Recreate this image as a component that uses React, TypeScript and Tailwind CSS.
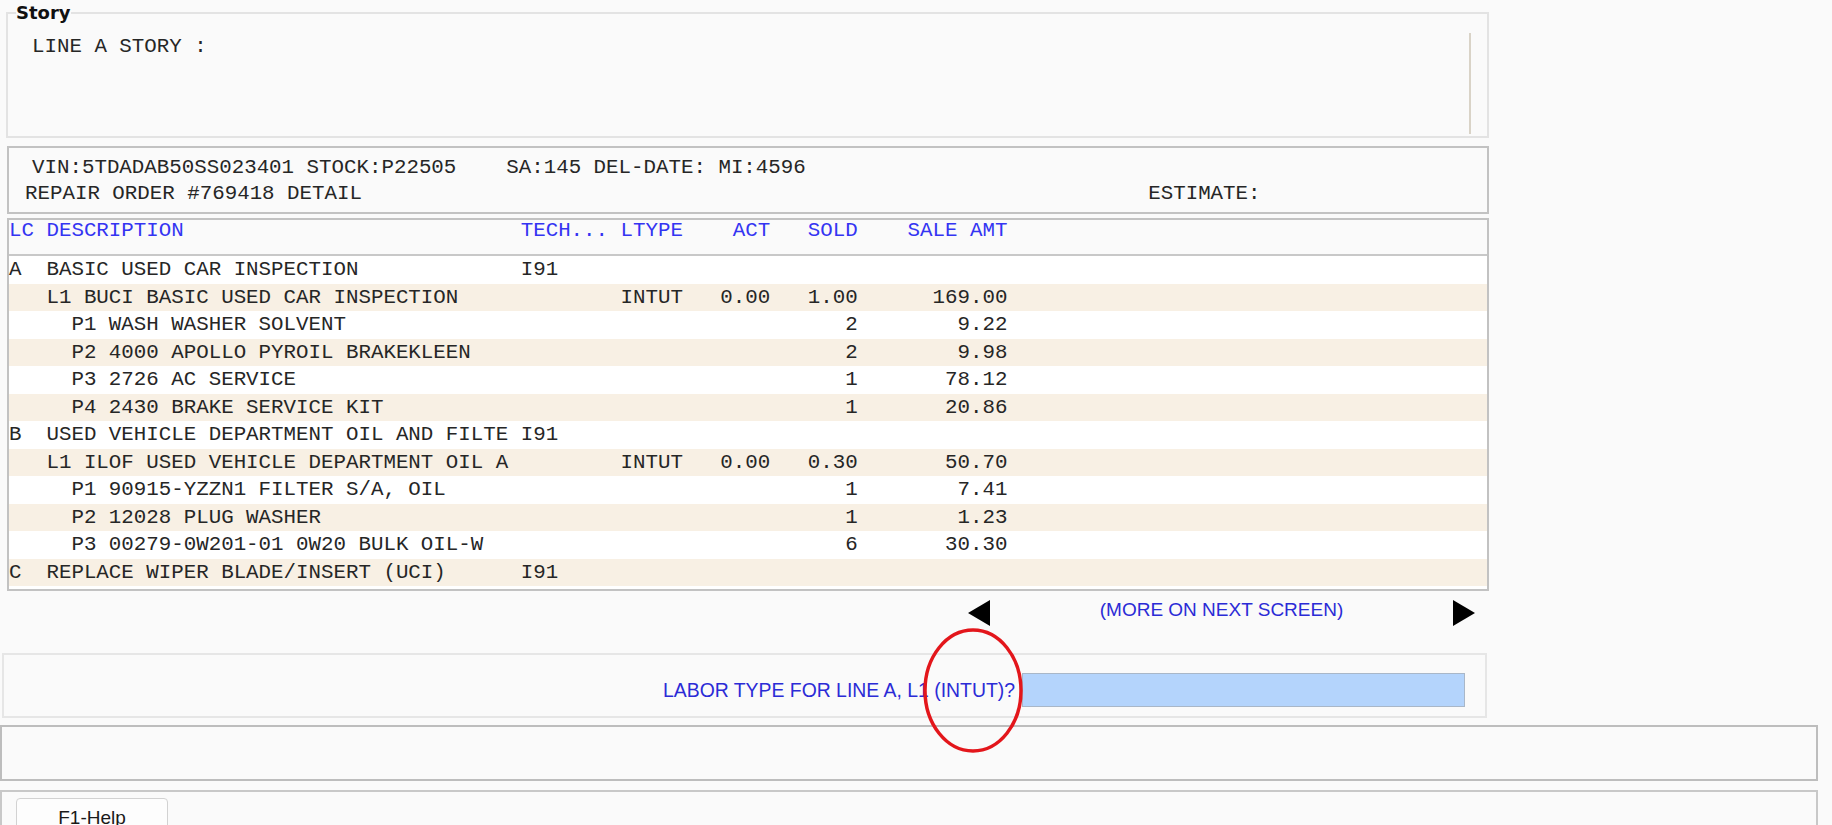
import React from "react";

type Line = { d: string; tech?: string; lt?: string; act?: string; sold?: string; amt?: string };

const lines: Line[] = [
  { d: "A  BASIC USED CAR INSPECTION", tech: "I91" },
  { d: "   L1 BUCI BASIC USED CAR INSPECTION", lt: "INTUT", act: "0.00", sold: "1.00", amt: "169.00" },
  { d: "     P1 WASH WASHER SOLVENT", sold: "2", amt: "9.22" },
  { d: "     P2 4000 APOLLO PYROIL BRAKEKLEEN", sold: "2", amt: "9.98" },
  { d: "     P3 2726 AC SERVICE", sold: "1", amt: "78.12" },
  { d: "     P4 2430 BRAKE SERVICE KIT", sold: "1", amt: "20.86" },
  { d: "B  USED VEHICLE DEPARTMENT OIL AND FILTE", tech: "I91" },
  { d: "   L1 ILOF USED VEHICLE DEPARTMENT OIL A", lt: "INTUT", act: "0.00", sold: "0.30", amt: "50.70" },
  { d: "     P1 90915-YZZN1 FILTER S/A, OIL", sold: "1", amt: "7.41" },
  { d: "     P2 12028 PLUG WASHER", sold: "1", amt: "1.23" },
  { d: "     P3 00279-0W201-01 0W20 BULK OIL-W", sold: "6", amt: "30.30" },
  { d: "C  REPLACE WIPER BLADE/INSERT (UCI)", tech: "I91" },
];

// fixed column grid, same as the green screen
function fmt(l: Line) {
  return (
    l.d.padEnd(41) +
    (l.tech ?? "").padEnd(8) +
    (l.lt ?? "").padEnd(8) +
    (l.act ?? "").padStart(4) +
    "   " +
    (l.sold ?? "").padStart(4) +
    "    " +
    (l.amt ?? "").padStart(8)
  );
}

const mono = "font-['Liberation_Mono','Courier_New',monospace] text-[20.8px] text-[#262626] whitespace-pre";

export default function App() {
  return (
    <div className="h-[825px] w-full overflow-hidden bg-[#fafafa]">
      {/* Story */}
      <fieldset className="ml-[6px] mt-[2px] w-[1483px] border-2 border-[#e3e3e3] px-[8px] pb-[2px]">
        <legend className="font-['DejaVu_Sans',sans-serif] text-[18px] font-bold leading-[21px] text-[#111]">
          Story
        </legend>
        <div className={`mt-[10px] mr-[8px] h-[101px] border-r-2 border-[#d9d3c7] pl-[16px] leading-[27px] ${mono}`}>
          LINE A STORY :
        </div>
      </fieldset>

      {/* RO header */}
      <div className={`ml-[7px] mt-[8px] h-[68px] w-[1482px] border-2 border-[#c2c2c2] pt-[7px] leading-[26px] ${mono}`}>
        <div className="pl-[23px]">VIN:5TDADAB50SS023401 STOCK:P22505    SA:145 DEL-DATE: MI:4596</div>
        <div className="pl-[16px]">{"REPAIR ORDER #769418 DETAIL".padEnd(90) + "ESTIMATE:"}</div>
      </div>

      {/* Detail lines */}
      <div className={`ml-[7px] mt-[4px] w-[1482px] border-2 border-[#c2c2c2] bg-white pb-[3px] ${mono}`}>
        <div className="h-[36px] border-b-2 border-[#c8c8c8] bg-[#fafafa] leading-[22px] text-[#3434f2]">
          {fmt({ d: "LC DESCRIPTION", tech: "TECH...", lt: "LTYPE", act: "ACT", sold: "SOLD", amt: "SALE AMT" })}
        </div>
        {lines.map((l, i) => (
          <div key={i} className={`h-[27.5px] leading-[27.5px] ${i % 2 === 1 ? "bg-[#f8f0e4]" : "bg-white"}`}>
            {fmt(l)}
          </div>
        ))}
      </div>

      {/* paging */}
      <div className="mt-[9px] flex h-[26px] items-start">
        <div className="w-[968px] shrink-0" />
        <svg width="22" height="26" viewBox="0 0 22 26" className="shrink-0">
          <polygon points="0,13 22,0 22,26" fill="#000" />
        </svg>
        <div className="w-[463px] shrink-0 text-center font-['Liberation_Sans',Arial,sans-serif] text-[19px] leading-[20px] text-[#2b2bd6]">
          (MORE ON NEXT SCREEN)
        </div>
        <svg width="22" height="26" viewBox="0 0 22 26" className="shrink-0">
          <polygon points="0,0 22,13 0,26" fill="#000" />
        </svg>
      </div>

      {/* prompt */}
      <div className="relative ml-[2px] mt-[27px] flex h-[65px] w-[1485px] items-start justify-end border-2 border-[#e6e6e6] pr-[20px] pt-[18px]">
        <span className="mr-[7px] font-['Liberation_Sans',Arial,sans-serif] text-[19.4px] leading-[34px] text-[#2b2bd6]">
          LABOR TYPE FOR LINE A, L1 (INTUT)?
        </span>
        <div className="h-[34px] w-[443px] border border-[#a9b7c8] bg-[#b4d4fc]" />
        <svg
          width="104"
          height="129"
          viewBox="0 0 104 129"
          className="pointer-events-none absolute left-[917px] top-[-29px] overflow-visible"
        >
          <ellipse cx="52" cy="64.5" rx="48" ry="60.5" fill="none" stroke="#e3161b" strokeWidth="3.5" />
        </svg>
      </div>

      {/* message line */}
      <div className="mt-[7px] h-[56px] w-[1818px] border-2 border-[#bdbdbd]" />

      {/* function keys */}
      <div className="mt-[9px] h-[60px] w-[1818px] border-2 border-[#c8c8c8] pl-[14px] pt-[6px]">
        <button className="flex h-[40px] w-[152px] justify-center rounded-[4px] border border-[#d2d2d2] bg-[#fdfdfd] pt-[8px] font-['Liberation_Sans',Arial,sans-serif] text-[19px] leading-[22px] text-[#1a1a1a]">
          F1-Help
        </button>
      </div>
    </div>
  );
}
